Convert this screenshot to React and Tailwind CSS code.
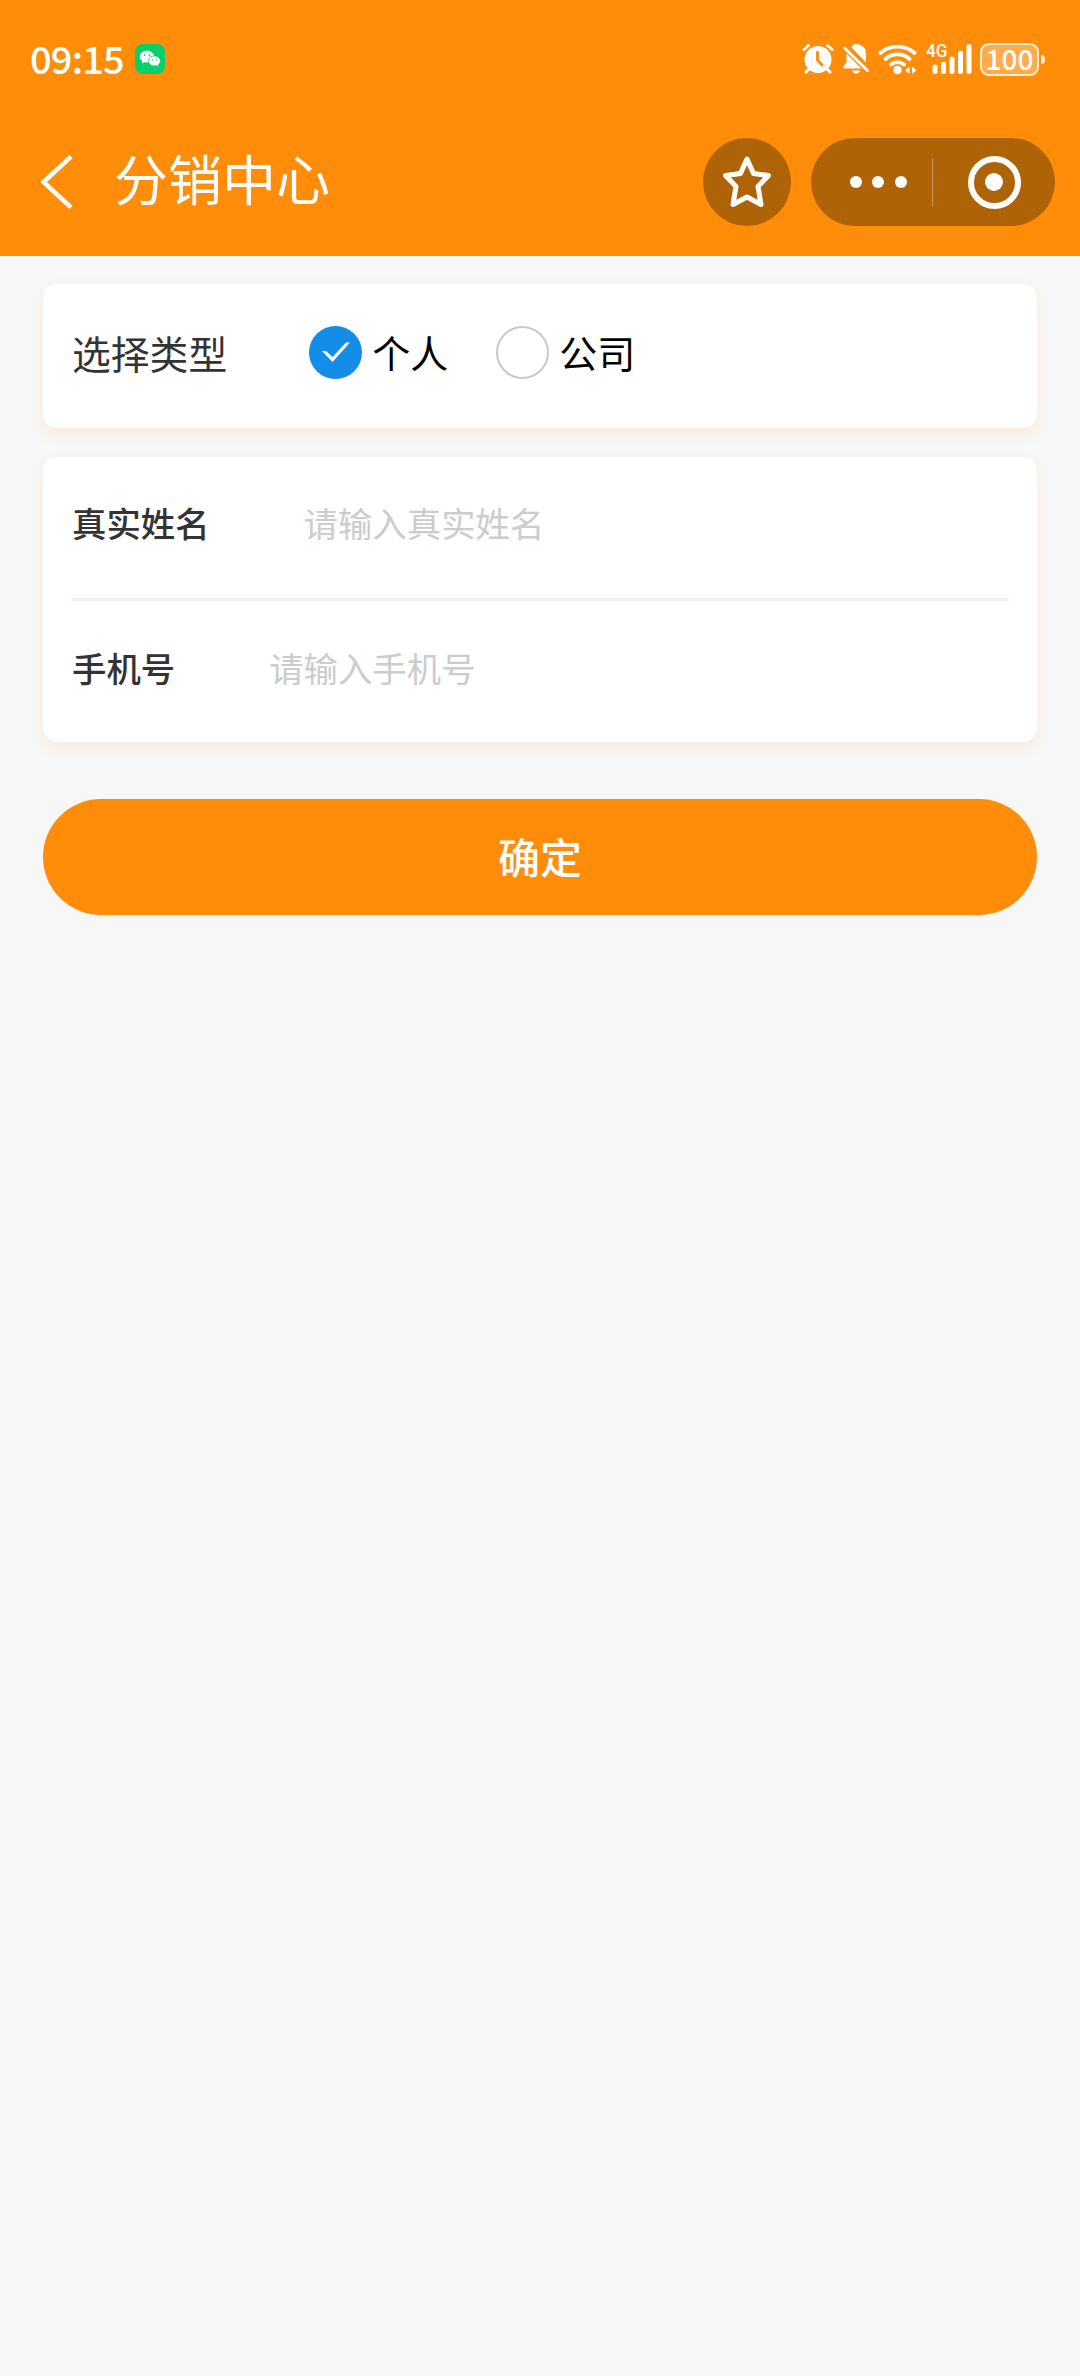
import React, { useState } from "react";

const WechatBadge = () => (
  <span className="w-[30px] h-[30px] ml-[11px] rounded-[8px] bg-[#07cf69] flex items-center justify-center">
    <svg width="30" height="30" viewBox="0 0 30 30">
      <path d="M12 6.8c-4.1 0-7.2 2.6-7.2 5.9 0 1.9 1 3.5 2.6 4.6l-.6 2.2 2.6-1.3c.8.2 1.7.4 2.6.4 4 0 7.2-2.7 7.2-5.9 0-3.3-3.2-5.9-7.2-5.9z" fill="#fff" />
      <path d="M19.4 11.9c-3.4 0-6 2.2-6 5s2.6 5 6 5c.8 0 1.5-.1 2.1-.3l2.2 1.1-.5-1.9c1.300-.9 2.200-2.300 2.200-3.900 0-2.800-2.600-5-6-5z" fill="#fff" stroke="#07cf69" strokeWidth="0.8" />
      <circle cx="9.7" cy="11.1" r="0.9" fill="#07cf69" />
      <circle cx="14.4" cy="11.1" r="0.9" fill="#07cf69" />
      <circle cx="17.5" cy="15.9" r="0.7" fill="#07cf69" />
      <circle cx="21.4" cy="15.9" r="0.7" fill="#07cf69" />
    </svg>
  </span>
);

const AlarmIcon = () => (
  <svg width="32" height="32" viewBox="0 0 32 32">
    <g fill="none" stroke="#fff" strokeWidth="3" strokeLinecap="round">
      <path d="M2 6.5 6.5 2.5M30 6.5 25.5 2.5M7 26l-3 3M25 26l3 3" />
    </g>
    <circle cx="16" cy="16.5" r="13.5" fill="#fff" />
    <path d="M15.5 9.5v7.5l4.5 5" fill="none" stroke="#ff8d0a" strokeWidth="2.8" strokeLinecap="round" strokeLinejoin="round" />
  </svg>
);

const BellOffIcon = () => (
  <svg width="28" height="32" viewBox="0 0 28 32">
    <path d="M9.5 4.5C10.5 2 12 1 14.5 1c5.5.5 9.5 4 9.5 9.5v9z" fill="#fff" />
    <path d="M4.5 10.5 19.5 25.5H1.5v-2l3-4z" fill="#fff" />
    <path d="M10 27.5h8c-.5 2-2 3-4 3s-3.5-1-4-3z" fill="#fff" />
    <path d="M2.5 5 25.5 27.5" stroke="#fff" strokeWidth="2.8" strokeLinecap="round" />
  </svg>
);

const WifiIcon = () => (
  <svg width="40" height="32" viewBox="0 0 40 32">
    <g fill="none" stroke="#fff" strokeWidth="3.8" strokeLinecap="round">
      <path d="M2.5 10a26 26 0 0 1 34 0" />
      <path d="M7.5 16a18 18 0 0 1 24 0" />
      <path d="M13 21.5a10 10 0 0 1 13 0" />
    </g>
    <circle cx="19.5" cy="27" r="4.2" fill="#fff" />
    <path d="M31.5 23.5v7.5l-4.5-3.7zM34 23.5v7.5l4.5-3.7z" fill="#fff" />
  </svg>
);

const SignalIcon = () => (
  <div className="relative w-[46px] h-[32px]">
    <svg width="46" height="32" viewBox="0 0 46 32">
      <g stroke="#fff" strokeWidth="5" strokeLinecap="round">
        <path d="M9 24v4.5M17.5 21v7.5M26 16v12.5M34.5 10v18.5M43 3.5v25" />
      </g>
    </svg>
    <span className="absolute left-0 -top-[3px] origin-left scale-x-90 text-[19px] leading-[22px] font-medium font-['Roboto',sans-serif]">4G</span>
  </div>
);

const Battery = () => (
  <div className="flex items-center">
    <div className="w-[59px] h-[33px] rounded-[9px] border-2 border-[#fff0d5] bg-[#ffac4c] flex items-center justify-center text-[28px] leading-none font-medium">
      <span className="-mt-[3px]">100</span>
    </div>
    <div className="w-[4px] h-[9px] ml-[2px] rounded-r-full bg-[#fff0d5]" />
  </div>
);

const StatusBar = () => (
  <div className="h-[118px] pl-[30px] pr-[35px] flex items-center justify-between">
    <div className="flex items-center">
      <span className="-mt-[3px] w-[94px] whitespace-nowrap text-[38px] leading-none font-medium tracking-[-0.8px]">09:15</span>
      <WechatBadge />
    </div>
    <div className="flex items-center gap-2">
      <AlarmIcon />
      <BellOffIcon />
      <WifiIcon />
      <SignalIcon />
      <Battery />
    </div>
  </div>
);

const NavBar = () => (
  <div className="h-[128px] pl-[39px] pr-[25px] flex items-center">
    <svg width="34" height="54" viewBox="0 0 34 54" fill="none" stroke="#fff" strokeWidth="4.5">
      <path d="M32 1.5 4.5 27 32 52.5" />
    </svg>
    <h1 className="ml-[41px] mb-[9px] text-[54px] leading-none">分销中心</h1>
    <button className="ml-auto w-[88px] h-[88px] rounded-full bg-[#ae6307] flex items-center justify-center">
      <svg width="52" height="54" viewBox="0 0 52 54" fill="none" stroke="#fff" strokeWidth="5" strokeLinejoin="round">
        <path d="M26 4 32.5 18.5 47.5 20.5 37 31.5 40 49.5 26 42 12 49.5 15 31.5 4.5 20.5 19.5 18.5z" />
      </svg>
    </button>
    <div className="ml-5 w-[244px] h-[88px] rounded-full bg-[#ae6307] flex items-center">
      <div className="w-[121px] pl-[13px] flex items-center justify-center gap-[10.5px]">
        <span className="w-[12px] h-[12px] rounded-full bg-white" />
        <span className="w-[12px] h-[12px] rounded-full bg-white" />
        <span className="w-[12px] h-[12px] rounded-full bg-white" />
      </div>
      <span className="w-px h-[48px] bg-[#c9935a]" />
      <div className="w-[122px] flex items-center justify-center">
        <span className="w-[53px] h-[53px] rounded-full border-[6px] border-white flex items-center justify-center">
          <span className="w-[18px] h-[18px] rounded-full bg-white" />
        </span>
      </div>
    </div>
  </div>
);

const Card = ({ className, children }) => (
  <section className={`rounded-[14px] bg-white px-[29px] shadow-[0_6px_16px_rgba(255,165,30,0.13)] ${className}`}>
    {children}
  </section>
);

const RadioOption = ({ label, checked, onSelect }) => (
  <button type="button" onClick={onSelect} className="flex items-center gap-[10px]">
    {checked ? (
      <span className="w-[53px] h-[53px] rounded-full bg-[#148de8] flex items-center justify-center">
        <svg width="30" height="22" viewBox="0 0 30 22">
          <path d="M1 10h4l6.5 6L25 1.5h4L11.5 21z" fill="#fff" />
        </svg>
      </span>
    ) : (
      <span className="w-[53px] h-[53px] rounded-full border-2 border-[#c8c8c8]" />
    )}
    <span className="text-[38px] leading-none text-black">{label}</span>
  </button>
);

const Field = ({ label, placeholder, className }) => (
  <label className={`flex items-center text-[34.4px] text-[#333] ${className}`}>
    <span className="mr-[94px] leading-none whitespace-nowrap font-medium">{label}</span>
    <input className="flex-1 min-w-0 h-[60px] pb-[2px] outline-none placeholder:text-[#ccc] placeholder:opacity-100" placeholder={placeholder} />
  </label>
);

const App = () => {
  const [type, setType] = useState("personal");

  return (
    <div className="w-[1080px] h-[2376px] bg-[#f7f7f7] overflow-hidden font-['Noto_Sans_CJK_SC',sans-serif]">
      <header className="h-[256px] bg-[#ff8d0a] text-white">
        <StatusBar />
        <NavBar />
      </header>

      <main className="px-[43px] pt-[28px]">
        <Card className="h-[144px] flex items-center pb-[8px]">
          <span className="text-[38.8px] leading-none text-[#333]">选择类型</span>
          <div className="ml-[82px] flex items-center gap-[48px]">
            <RadioOption label="个人" checked={type === "personal"} onSelect={() => setType("personal")} />
            <RadioOption label="公司" checked={type === "company"} onSelect={() => setType("company")} />
          </div>
        </Card>

        <Card className="h-[285px] mt-[29px]">
          <Field label="真实姓名" placeholder="请输入真实姓名" className="h-[144px] pb-[10px] border-b-[3px] border-[#f9eef0]" />
          <Field label="手机号" placeholder="请输入手机号" className="h-[136px] pb-[3px]" />
        </Card>

        <button type="button" className="mt-[57px] pb-[3px] w-full h-[116px] rounded-full bg-[#ff8d0a] text-white text-[42px] font-medium leading-none">
          确定
        </button>
      </main>
    </div>
  );
};

export default App;
